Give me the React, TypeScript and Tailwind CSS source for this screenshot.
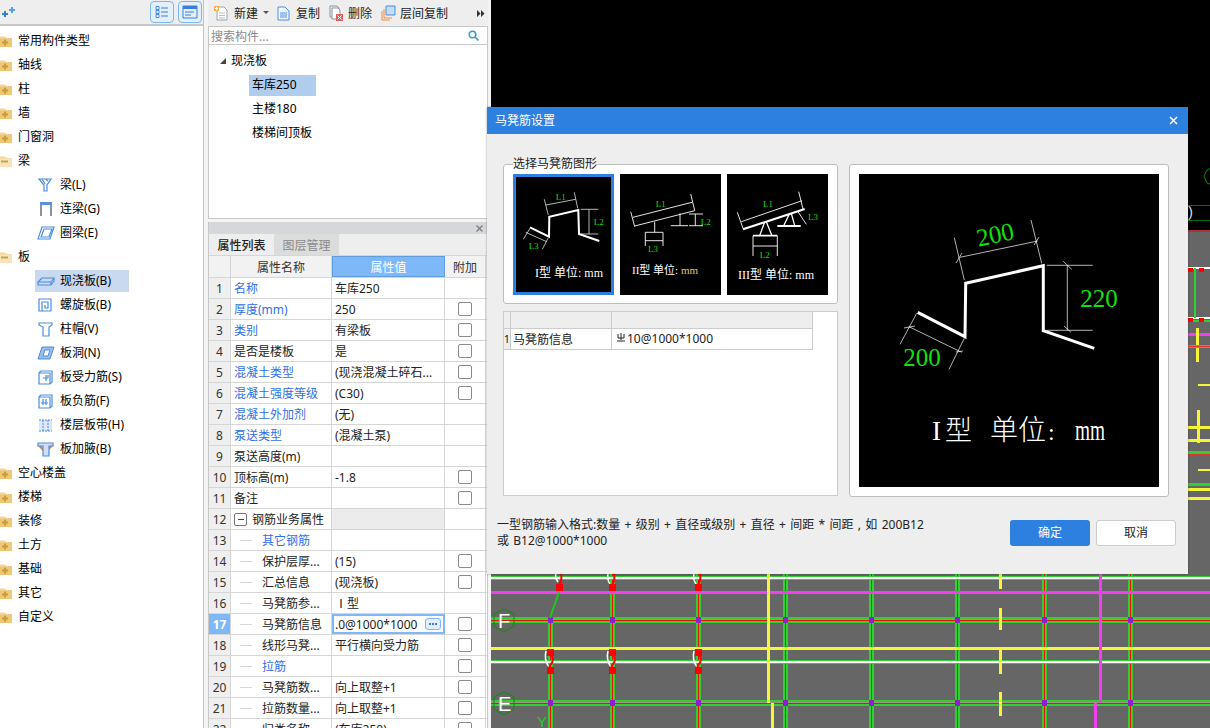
import React from 'react';

const BLUE = '#4a8ee0';

const FolderIcon = ({ open }: { open?: boolean }) => (
    <svg width="13" height="13" viewBox="0 0 13 13" className="shrink-0">
        <path d="M0 1.5h5l1.5 1.5H12v9H0z" fill="#f3d596" />
        <path d="M0 3.5h12v8.5H0z" fill={open ? '#f8e4b8' : '#eec877'} />
        {open ? (
            <path d="M1 6.5h7" stroke="#c9a050" strokeWidth="2" />
        ) : (
            <path d="M2 7.5h6M5 4.5v6" stroke="#c99a3e" strokeWidth="2" />
        )}
    </svg>
);

const LeafIcon = ({ name }: { name: string }) => {
    const s = { fill: 'none', stroke: BLUE, strokeWidth: 1.2 };
    return (
        <svg width="18" height="16" viewBox="0 0 18 16" className="shrink-0">
            {name === 'beam' && <g {...s}><path d="M2 2h12l-4 6v6H7V8z" /><path d="M5 2l3 5M9 2l2 2" /></g>}
            {name === 'link' && <g><path d="M3 1h12v3H3z" fill="#5b93d8" /><path d="M4 4v11M14 4v11" stroke="#8a949e" strokeWidth="2" fill="none" /></g>}
            {name === 'ring' && <g {...s}><path d="M5 2h12l-4 12H1z" /><path d="M7 4h8l-3 8H4z" /></g>}
            {name === 'slab' && <g {...s}><path d="M1 9l4-4h12v3l-3 4H1z" /><path d="M1 9h13l3-4M14 9v3" /></g>}
            {name === 'spiral' && <g {...s}><path d="M2 2h12v12H2z" /><path d="M5 14V5h6v6H8V8" /></g>}
            {name === 'cap' && <g {...s}><path d="M2 2h13v2l-3 2v9H6V6L2 4z" /></g>}
            {name === 'hole' && <g><path d="M5 2h12l-4 12H1z" fill="#9dbde6" stroke={BLUE} /><path d="M8 5h5l-2 6H6z" fill="#fff" stroke={BLUE} /></g>}
            {name === 'rebar' && <g {...s}><path d="M2 4l2-2h11v11l-2 2H2z" /><path d="M2 4h11v11M6 9h5M9 6v6M11 6v3" /></g>}
            {name === 'rebar2' && <g {...s}><path d="M2 4l2-2h11v11l-2 2H2z" /><path d="M2 4h11v11M4 10h7M6 6v6M9 6v6" /></g>}
            {name === 'strip' && <g><path d="M2 3h13v11H2z" fill="#dce8f6" /><path d="M2 3h13M2 14h13M6 3v11M11 3v11" stroke={BLUE} strokeDasharray="2 1" fill="none" /></g>}
            {name === 'haunch' && <g><path d="M1 5h4l2 6zM16 5h-4l-2 6z" fill="#f08020" /><path d="M1 2h15v3h-4v10H6V5H1z" fill="#cfe0f5" stroke={BLUE} strokeWidth="1.2" /></g>}
        </svg>
    );
};

const beamItems = [
    { icon: 'beam', label: '梁(L)' },
    { icon: 'link', label: '连梁(G)' },
    { icon: 'ring', label: '圈梁(E)' },
];
const slabItems = [
    { icon: 'slab', label: '现浇板(B)', selected: true },
    { icon: 'spiral', label: '螺旋板(B)' },
    { icon: 'cap', label: '柱帽(V)' },
    { icon: 'hole', label: '板洞(N)' },
    { icon: 'rebar', label: '板受力筋(S)' },
    { icon: 'rebar2', label: '板负筋(F)' },
    { icon: 'strip', label: '楼层板带(H)' },
    { icon: 'haunch', label: '板加腋(B)' },
];

const FolderRow = ({ label, open }: { label: string; open?: boolean }) => (
    <div className="h-[24px] flex items-center gap-[5px]">
        <FolderIcon open={open} />
        <span>{label}</span>
    </div>
);

const LeafRow = ({ icon, label, selected }: { icon: string; label: string; selected?: boolean }) => (
    <div className="h-[24px] flex items-center">
        <div className={`ml-[35px] w-[94px] h-[22px] flex items-center pl-[2px] gap-[5px] whitespace-nowrap ${selected ? 'bg-[#c8d9f0]' : ''}`}>
            <LeafIcon name={icon} />
            <span>{label}</span>
        </div>
    </div>
);

const LeftTree = () => (
    <aside className="w-[204px] shrink-0 h-full bg-white border-r border-[#c4c4c4] flex flex-col">
        <div className="h-[26px] bg-[#eeeeee] border-b-2 border-[#c8c8c8] flex items-center justify-between pl-[2px] pr-[1px] shrink-0">
            <svg width="14" height="12" viewBox="0 0 14 12">
                <path d="M0 8h6M3 5v6" stroke="#3a7fd5" strokeWidth="2" />
                <path d="M7 4h6M10 1v6" stroke="#5aa0e8" strokeWidth="2" />
            </svg>
            <div className="flex gap-[4px]">
                <div className="w-[24px] h-[22px] rounded-[4px] border border-[#7ab8ef] bg-[#e3f0fb] flex items-center justify-center">
                    <svg width="14" height="14" viewBox="0 0 14 14" fill="none" stroke="#3a7fd5">
                        <path d="M1 1.5h3v3H1zM1 9.5h3v3H1zM1 5.5h3v3H1z" strokeWidth="0.9" />
                        <path d="M6 3h7M6 7h7M6 11h7" />
                    </svg>
                </div>
                <div className="w-[24px] h-[22px] rounded-[4px] border border-[#7ab8ef] bg-[#e3f0fb] flex items-center justify-center">
                    <svg width="16" height="14" viewBox="0 0 16 14" fill="none" stroke="#3a7fd5">
                        <path d="M1 1h14v12H1z" />
                        <path d="M1 2.5h14" strokeWidth="3" />
                        <path d="M3 7h9M3 10h6" />
                    </svg>
                </div>
            </div>
        </div>
        <div className="pt-[3px] text-[12px] text-black">
            {['常用构件类型', '轴线', '柱', '墙', '门窗洞'].map(l => <FolderRow key={l} label={l} />)}
            <FolderRow label="梁" open />
            {beamItems.map(i => <LeafRow key={i.label} {...i} />)}
            <FolderRow label="板" open />
            {slabItems.map(i => <LeafRow key={i.label} {...i} />)}
            {['空心楼盖', '楼梯', '装修', '土方', '基础', '其它', '自定义'].map(l => <FolderRow key={l} label={l} />)}
        </div>
    </aside>
);

const Toolbar = () => (
    <div className="h-[27px] bg-[#eeeeee] border-b border-[#c8c8c8] flex items-center text-[12px] text-[#222] whitespace-nowrap relative shrink-0">
        <svg width="16" height="16" viewBox="0 0 16 16" className="ml-[5px]" fill="none">
            <path d="M4 2h7l3 3v10H4z" fill="#fff" stroke="#9aa3ad" />
            <path d="M6 8h6M6 10.500h6M6 13h6" stroke="#b8bec4" />
            <path d="M1 1h5v5H1z" fill="#f7b05a" />
            <path d="M2 3.500h3M3.500 2v3" stroke="#fff" />
        </svg>
        <span className="ml-[5px] mt-[2px]">新建</span>
        <svg width="6" height="4" viewBox="0 0 6 4" className="ml-[5px]"><path d="M0 0h6L3 3z" fill="#555" /></svg>
        <svg width="13" height="15" viewBox="0 0 13 15" className="ml-[8px]" fill="none" stroke="#4a8ee0">
            <path d="M1 1h7l4 4v9H1z" fill="#f2f7fd" />
            <path d="M3 7h7M3 9h7M3 11h7" />
        </svg>
        <span className="ml-[6px] mt-[2px]">复制</span>
        <svg width="15" height="16" viewBox="0 0 15 16" className="ml-[9px]" fill="none">
            <path d="M1 1h7l2 2v9H1z" stroke="#8e979f" />
            <path d="M3 3h6l2 2v9H3z" fill="#fff" stroke="#8e979f" />
            <path d="M7 9h7v7H7z" fill="#d9615e" />
            <path d="M8.500 10.500l4 4M12.500 10.500l-4 4" stroke="#fff" />
        </svg>
        <span className="ml-[4px] mt-[2px]">删除</span>
        <svg width="15" height="16" viewBox="0 0 15 16" className="ml-[9px]" fill="none">
            <path d="M1 6v9h8M3 4v9h8" stroke="#ee8a3c" />
            <path d="M5 1h9v9H5z" fill="#c4dcf6" stroke="#4a8ee0" />
        </svg>
        <span className="ml-[4px] mt-[2px]">层间复制</span>
        <span className="absolute right-[3px] top-[10px] flex">
            <svg width="8" height="7" viewBox="0 0 8 7" fill="#333"><path d="M0 0l3.500 3.500L0 7zM4 0l3.500 3.500L4 7z" /></svg>
        </span>
    </div>
);

const ComponentTree = () => (
    <div className="h-[192px] bg-white border-x border-b border-[#c8c8c8] shrink-0">
        <div className="h-[17px] flex items-center justify-between border-b border-[#c8c8c8] pl-[2px] pr-[8px] text-[12px] text-[#8a8a8a] box-content">
            <span className="mt-[2px]">搜索构件...</span>
            <svg width="11" height="11" viewBox="0 0 11 11" fill="none" stroke="#3d9ad0" strokeWidth="1.6">
                <circle cx="4.500" cy="4.500" r="3.300" />
                <path d="M7 7l3.500 3.500" />
            </svg>
        </div>
        <div className="pt-[4px] text-[12px] text-black">
            <div className="h-[24px] flex items-center pl-[11px] gap-[5px]">
                <svg width="6" height="6" viewBox="0 0 6 6"><path d="M6 0v6H0z" fill="#444" /></svg>
                <span>现浇板</span>
            </div>
            <div className="h-[24px] flex items-center ml-[40px]">
                <div className="w-[67px] h-[21px] bg-[#b0cdee] pl-[3px] flex items-center">车库250</div>
            </div>
            <div className="h-[24px] flex items-center ml-[43px]">主楼180</div>
            <div className="h-[24px] flex items-center ml-[43px]">楼梯间顶板</div>
        </div>
    </div>
);

type Row = {
    name: string;
    value?: string;
    link?: boolean;
    check?: boolean;
    indent?: boolean;
    group?: boolean;
    active?: boolean;
};

const rows: Row[] = [
    { name: '名称', value: '车库250', link: true },
    { name: '厚度(mm)', value: '250', link: true, check: true },
    { name: '类别', value: '有梁板', link: true, check: true },
    { name: '是否是楼板', value: '是', check: true },
    { name: '混凝土类型', value: '(现浇混凝土碎石...', link: true, check: true },
    { name: '混凝土强度等级', value: '(C30)', link: true, check: true },
    { name: '混凝土外加剂', value: '(无)', link: true },
    { name: '泵送类型', value: '(混凝土泵)', link: true },
    { name: '泵送高度(m)' },
    { name: '顶标高(m)', value: '-1.8', check: true },
    { name: '备注', check: true },
    { name: '钢筋业务属性', group: true },
    { name: '其它钢筋', link: true, indent: true },
    { name: '保护层厚...', value: '(15)', check: true, indent: true },
    { name: '汇总信息', value: '(现浇板)', check: true, indent: true },
    { name: '马凳筋参...', value: 'Ⅰ型', indent: true },
    { name: '马凳筋信息', value: '.0@1000*1000', check: true, indent: true, active: true },
    { name: '线形马凳...', value: '平行横向受力筋', check: true, indent: true },
    { name: '拉筋', link: true, check: true, indent: true },
    { name: '马凳筋数...', value: '向上取整+1', check: true, indent: true },
    { name: '拉筋数量...', value: '向上取整+1', check: true, indent: true },
    { name: '归类名称', value: '(车库250)', check: true, indent: true },
];

const PropertyRow = ({ row, index }: { row: Row; index: number }) => (
    <div className="h-[21px] flex border-b border-[#d6d6d6] text-[12px] shrink-0">
        <div className={`w-[22px] shrink-0 border-r border-[#d6d6d6] flex items-center justify-center pt-[2px] ${row.active ? 'bg-[#7eb8f8] text-white font-bold' : 'bg-[#efefef] text-[#333]'}`}>
            {index}
        </div>
        <div className="w-[101px] shrink-0 border-r border-[#d6d6d6] flex items-center whitespace-nowrap pl-[3px]">
            {row.group && (
                <span className="w-[13px] h-[13px] border border-[#777] rounded-[2px] flex items-center justify-center mr-[5px] shrink-0">
                    <span className="w-[6px] h-px bg-[#444]" />
                </span>
            )}
            {row.indent && <span className="w-[12px] h-px bg-[#d6d6d6] ml-[6px] mr-[10px] shrink-0" />}
            <span className={`mt-[2px] ${row.link ? 'text-[#2f6fe8]' : 'text-[#222]'}`}>{row.name}</span>
        </div>
        {row.active ? (
            <div className="w-[113px] shrink-0 border-2 border-[#7eb8f8] flex items-center justify-between pl-[1px] pr-[2px] whitespace-nowrap text-[#222]">
                <span className="mt-[2px]">{row.value}</span>
                <span className="w-[16px] h-[12px] rounded-[3px] border border-[#7eb8f8] bg-[#e3f0fb] flex items-center justify-center gap-[1px]">
                    <span className="w-[2px] h-[2px] bg-[#3a7fd5]" />
                    <span className="w-[2px] h-[2px] bg-[#3a7fd5]" />
                    <span className="w-[2px] h-[2px] bg-[#3a7fd5]" />
                </span>
            </div>
        ) : (
            <div className={`w-[113px] shrink-0 border-r border-[#d6d6d6] flex items-center pl-[3px] pt-[2px] whitespace-pre text-[#222] ${row.group ? 'bg-[#ececec]' : ''}`}>
                {row.value}
            </div>
        )}
        <div className="w-[41px] shrink-0 border-r border-[#d6d6d6] flex items-center justify-center">
            {row.check && <span className="w-[14px] h-[14px] rounded-[2px] border border-[#8a8a8a] bg-white" />}
        </div>
    </div>
);

const PropertyPanel = () => (
    <div className="flex-1 min-h-0 flex flex-col border-x border-[#c8c8c8] mt-[3px] overflow-hidden bg-white">
        <div className="h-[12px] bg-[#d5d7da] flex items-center justify-end pr-[4px] shrink-0">
            <svg width="7" height="7" viewBox="0 0 7 7" stroke="#808080" strokeWidth="1.400"><path d="M0.500 0.500l6 6M6.500 0.500l-6 6" /></svg>
        </div>
        <div className="h-[22px] bg-[#eeeeee] flex text-[12px] shrink-0 border-b border-[#d6d6d6]">
            <div className="w-[65px] pt-[2px] flex items-center justify-center text-[#222] font-medium">属性列表</div>
            <div className="w-[65px] pt-[2px] flex items-center justify-center bg-[#dcdcdc] text-[#8a8a8a]">图层管理</div>
        </div>
        <div className="h-[22px] flex border-b border-[#d6d6d6] text-[12px] shrink-0 bg-[#f2f2f2] text-[#333]">
            <div className="w-[22px] border-r border-[#d6d6d6]" />
            <div className="w-[101px] pt-[2px] border-r border-[#d6d6d6] flex items-center justify-center">属性名称</div>
            <div className="w-[113px] pt-[2px] border border-[#5f9ce0] bg-[#7eb8f8] text-white flex items-center justify-center">属性值</div>
            <div className="w-[41px] pt-[2px] border-r border-[#d6d6d6] flex items-center justify-center">附加</div>
        </div>
        {rows.map((row, i) => <PropertyRow key={i} row={row} index={i + 1} />)}
    </div>
);

const greenV = [550, 612, 698, 785, 871, 957, 1044, 1130];

// drawing under the dialog, in page coordinates
const CadCanvas = () => (
    <svg viewBox="491 0 719 728" className="w-[719px] h-[728px] block" fill="none" shapeRendering="crispEdges">
        <rect x="491" y="0" width="719" height="728" fill="#000" />
        <rect x="491" y="232" width="719" height="496" fill="#666" />
        <path d="M1188 205h22M1188 220h22" stroke="#0a6a0a" />
        <path d="M1188 231h22" stroke="#a33" strokeWidth="2" />
        <path d="M1188 268h22" stroke="#fff" strokeWidth="2" />
        <path d="M1188 318h22" stroke="#fff" strokeWidth="2" />
        <path d="M1188 321h22" stroke="#2fd02f" strokeWidth="2" />
        <path d="M1195 268v50" stroke="#2fd02f" strokeWidth="2" />
        <path d="M1188 334h22" stroke="#f040f0" strokeWidth="3" />
        <path d="M1197 328v34" stroke="#f5f53a" strokeWidth="3" />
        <path d="M1188 346h22" stroke="#2fd02f" strokeWidth="3" />
        <path d="M1188 346h22" stroke="#e33" />
        <path d="M1198 385h12M1198 470h12" stroke="#f5f53a" strokeWidth="2" />
        <path d="M1198 410v33M1188 427h22M1188 440h22M1188 489h22M1188 498h22" stroke="#f5f53a" strokeWidth="3" />
        <path d="M1188 452h22M1188 484h22" stroke="#2fd02f" strokeWidth="3" />
        <path d="M1188 454h22" stroke="#d33" />
        <path d="M1188 270h5M1199 270h5M1188 320h5M1199 320h5" stroke="#f00" strokeWidth="4" />

        {greenV.map(x => {
            const top = x === 550 ? 618 : 574;
            return (
                <g key={x}>
                    <path d={`M${x} ${top}V728`} stroke="#2fd02f" strokeWidth="5" />
                    <path d={`M${x} ${top}V728`} stroke="#f01010" strokeWidth="1" />
                </g>
            );
        })}
        {[620, 703].map(y => (
            <g key={y}>
                <path d={`M491 ${y}H1210`} stroke="#2fd02f" strokeWidth="6" />
                <path d={`M491 ${y}H1210`} stroke="#b08a8a" strokeWidth="2" />
                <path d={`M491 ${y}H1210`} stroke="#f01010" strokeWidth="1" />
            </g>
        ))}
        {[578, 662].map(y => (
            <g key={y}>
                <path d={`M491 ${y}H1210`} stroke="#2fd02f" strokeWidth="4" />
                <path d={`M491 ${y}H1210`} stroke="#fff" strokeWidth="2" />
            </g>
        ))}
        <path d="M491 592H1210" stroke="#f040f0" strokeWidth="3" />
        <path d="M491 648H1210" stroke="#f5f53a" strokeWidth="3" />
        <path d="M768 574V703M772 703V728" stroke="#f5f53a" strokeWidth="3" />
        <path d="M1100 574V703M1095 703V728" stroke="#f040f0" strokeWidth="3" />
        <path d="M1000 574v15M1000 608v22M1000 650v24M1000 692v24" stroke="#f5f53a" strokeWidth="3" />
        {greenV.flatMap(x => [620, 703].map(y => (
            <rect key={`${x}-${y}`} x={x - 2} y={y - 3} width="5" height="6" fill="#8a20d0" />
        )))}
        <g shapeRendering="auto">
            <path d="M559 592L550 618" stroke="#1ec81e" strokeWidth="2" />
            <path d="M561 574c1 4 0 8-2 11M614 574c1 4 0 8-2 11M700 574c1 4 0 8-2 11" stroke="#f00" strokeWidth="2" />
            <path d="M556 574c-1 2 0 5 2 8M608 574c-1 4 0 7 2 10M694 574c-1 4 0 7 2 10" stroke="#fff" strokeWidth="1.500" />
            {[550, 612, 698].map(x => (
                <g key={x}>
                    <path d={`M${x - 4} 651c-2 8 0 12 3 16`} stroke="#fff" strokeWidth="1.500" />
                    <path d={`M${x + 1} 655c3 3 2 7 0 9s-2 2 0 5`} stroke="#f00" strokeWidth="2" />
                </g>
            ))}
            <polygon points="504,609 514,614 514,626 504,632 494,626 494,614" stroke="#0f8a0f" />
            <polygon points="504,692 514,697 514,709 504,715 494,709 494,697" stroke="#0f8a0f" />
            <polygon points="1215,166 1207,170 1204,176 1207,183 1215,186" stroke="#0f8a0f" />
            <text x="498" y="628" fill="#fff" fontSize="20" fontFamily="'Liberation Sans', sans-serif">F</text>
            <text x="498" y="711" fill="#fff" fontSize="20" fontFamily="'Liberation Sans', sans-serif">E</text>
            <text x="537" y="727" fill="#22d022" fontSize="15" fontFamily="'Liberation Sans', sans-serif">Y</text>
            <text x="1188" y="217" fill="#ddd" fontSize="15" fontFamily="'Liberation Sans', sans-serif">)</text>
        </g>
        {[[559, 587], [612, 587], [698, 587], [550, 652], [612, 652], [698, 652], [550, 670], [612, 670], [698, 670]].map(([x, y]) => (
            <rect key={`${x}-${y}`} x={x - 3} y={y - 3} width="7" height="7" fill="#f00" />
        ))}
    </svg>
);

const SERIF = "'Liberation Serif', 'Noto Sans CJK SC', serif";

const ThumbOne = () => (
    <svg viewBox="0 0 101 121" className="w-[101px] h-[121px] block" fill="none" stroke="#fff">
        <path d="M17 53.300L36 62.700L36.300 42.700L65.300 36L66 60L86.300 67" strokeWidth="2" />
        <g strokeWidth="0.700">
            <path d="M31.300 25.300L35.300 41M61.300 18.300L64.700 34.300M33 31L62.700 25.300" />
            <path d="M67.700 35.300H85.300M67.700 60H85.300M76 35.300V60" />
            <path d="M17 54.300L10.300 65.300M35.300 63.700L29.300 75.300M12.700 58.300L33.700 67.700" />
        </g>
        <g fill="#11dd11" stroke="none" fontSize="9" fontFamily={SERIF} textAnchor="middle">
            <text x="47.700" y="26">L1</text>
            <text x="85.700" y="51">L2</text>
            <text x="20.700" y="75">L3</text>
        </g>
        <text x="22" y="103" fill="#fff" stroke="none" fontSize="12" fontFamily={SERIF}>I型 单位: mm</text>
    </svg>
);

const ThumbTwo = () => (
    <svg viewBox="0 0 101 121" className="w-[101px] h-[121px] block" fill="none" stroke="#fff" strokeWidth="0.900">
        <path d="M13 43.300L72 28.300M14.700 52L74.700 36.700M10.700 37.700L14.700 52.700M70.700 20L74.700 36.700" />
        <path d="M34.700 47.700V58.300M25.300 58.300H43M25.300 58.300V72M43 58.300V72M25.300 66.700H43" />
        <path d="M60 39.300V51.700M50.700 51.700H68M69 40H83M69 51.700H83M75.300 40V51.700" />
        <g fill="#11dd11" stroke="none" fontSize="9" fontFamily={SERIF} textAnchor="middle">
            <text x="40.700" y="33">L1</text>
            <text x="85.700" y="51">L2</text>
            <text x="33" y="78">L3</text>
        </g>
        <text x="12" y="100" fill="#fff" stroke="none" fontSize="11" fontFamily={SERIF}>II型 单位: <tspan fill="#f5c26b">mm</tspan></text>
    </svg>
);

const ThumbThree = () => (
    <svg viewBox="0 0 101 121" className="w-[101px] h-[121px] block" fill="none" stroke="#fff" strokeWidth="0.900">
        <path d="M16 55.300L77.700 35" strokeWidth="2.200" />
        <path d="M14.300 47.700L75 26.700M10.300 38.300L16 54.300M71.700 17.700L76 35" />
        <path d="M37.700 47.700L32.700 61.700M39.300 47.700L45 61.700M62.700 39.300L56.700 51.700M64.300 39.300L67.700 51.700" strokeWidth="1.300" />
        <path d="M26 61.700H50.300M50.300 52H73.700" strokeWidth="1.800" />
        <path d="M26 61.700V82M50.300 61.700V82M26 72H50.300M71 37.700L79.300 50.300" />
        <g fill="#11dd11" stroke="none" fontSize="9" fontFamily={SERIF} textAnchor="middle">
            <text x="41" y="33">L1</text>
            <text x="37.700" y="84">L2</text>
            <text x="86" y="45.500">L3</text>
        </g>
        <text x="11" y="104.700" fill="#fff" stroke="none" fontSize="12" fontFamily={SERIF}>III型 单位: mm</text>
    </svg>
);

const BigPreview = () => (
    <svg viewBox="0 0 300 313" className="w-[300px] h-[313px] block bg-black" fill="none" stroke="#fff">
        <path d="M58.700 138.300L106 162.700L106.700 109.300L184.300 91.700L184.300 156.700L235.300 174.300" strokeWidth="3" />
        <g strokeWidth="0.700">
            <path d="M95.300 63.700L105.300 106M172 46L182.700 89.300M101 83.300L178.700 67M97 89L103 79M175 71L180 63" />
            <path d="M187.700 91.300H233.700M187.700 156.300H233.700M208.300 91.300V156.300M204.300 87.300L212.700 95.300M205 152L212 158.300" />
            <path d="M57.700 139.300L41 170.300M105.300 164.300L90 195.300M50 152.700L102.700 178.300M45 154L56 152M97 178L104 177" />
        </g>
        <g fill="#11e011" stroke="none" fontSize="25" fontFamily={SERIF} textAnchor="middle">
            <text x="136" y="69" transform="rotate(-12 136 60)">200</text>
            <text x="240" y="133">220</text>
            <text x="63" y="192">200</text>
        </g>
        <g fill="#fff" stroke="none" fontFamily={SERIF}>
            <text x="73" y="266" fontSize="27">I</text>
            <text x="86" y="266" fontSize="27" fontWeight="300">型</text>
            <text x="131" y="266" fontSize="28" fontWeight="300">单位</text>
            <text x="189" y="266" fontSize="24">:</text>
            <text x="216" y="266" fontSize="30" textLength="30" lengthAdjust="spacingAndGlyphs">mm</text>
        </g>
    </svg>
);

const RebarGlyph = () => (
    <svg width="8" height="9" viewBox="0 0 8 9" fill="none" stroke="#222" className="mr-[2px] -mt-[3px]">
        <path d="M1 1v4h6V1M4 0v7M0 8h8" />
    </svg>
);

const SpringDialog = () => (
    <div className="absolute left-[487px] top-[107px] w-[701px] h-[467px] bg-[#eeeeee] text-[12px] text-[#222] shadow-[0_0_2px_rgba(0,0,0,0.4)]">
        <div className="h-[27px] bg-[#2d7fe0] text-white flex items-center justify-between pl-[8px] pr-[10px]">
            <span>马凳筋设置</span>
            <svg width="9" height="9" viewBox="0 0 9 9" stroke="#fff" strokeWidth="1.500"><path d="M1 1l7 7M8 1L1 8" /></svg>
        </div>
        <div className="flex gap-[11px] pl-[16px] pt-[30px]">
            <div className="w-[335px]">
                <fieldset className="-mt-[8px] h-[148px] border border-[#bdbdbd] rounded-[3px] bg-white px-[9px]">
                    <legend className="leading-[16px] text-[#222]">选择马凳筋图形</legend>
                    <div className="flex gap-[6px] pt-[2px]">
                        <div className="w-[101px] h-[121px] bg-black ring-[3px] ring-inset ring-[#2d7fe0]"><ThumbOne /></div>
                        <div className="w-[101px] h-[121px] bg-black"><ThumbTwo /></div>
                        <div className="w-[101px] h-[121px] bg-black"><ThumbThree /></div>
                    </div>
                </fieldset>
                <div className="mt-[7px] h-[185px] border border-[#cccccc] bg-white">
                    <div className="w-[309px]">
                        <div className="h-[17px] flex bg-[#eeeeee] border-b border-[#cccccc]">
                            <div className="w-[7px] border-r border-[#cccccc]" />
                            <div className="w-[101px] border-r border-[#cccccc]" />
                            <div className="flex-1 border-r border-[#cccccc]" />
                        </div>
                        <div className="h-[21px] flex border-b border-[#cccccc]">
                            <div className="w-[7px] border-r border-[#cccccc] bg-[#eeeeee] flex items-center justify-center text-[11px]">1</div>
                            <div className="w-[101px] border-r border-[#cccccc] pl-[2px] pt-[2px] flex items-center">马凳筋信息</div>
                            <div className="flex-1 border-r border-[#cccccc] pl-[5px] flex items-center"><RebarGlyph />10@1000*1000</div>
                        </div>
                    </div>
                </div>
            </div>
            <div className="w-[320px] h-[333px] border border-[#bdbdbd] rounded-[3px] bg-white p-[9px]">
                <BigPreview />
            </div>
        </div>
        <div className="flex justify-between pl-[10px] pr-[12px] mt-[23px]">
            <p className="w-[436px] leading-[16px] -mt-[3px] [word-spacing:1.2px]">一型钢筋输入格式:数量 + 级别 + 直径或级别 + 直径 + 间距 * 间距 , 如 200B12 或 B12@1000*1000</p>
            <div className="flex gap-[6px]">
                <button className="w-[80px] h-[26px] rounded-[3px] bg-[#2d7fe0] text-white">确定</button>
                <button className="w-[80px] h-[26px] rounded-[3px] bg-white border border-[#cccccc]">取消</button>
            </div>
        </div>
    </div>
);

export default function App() {
    return (
        <div className="relative w-[1210px] h-[728px] overflow-hidden flex bg-[#f4f4f4] font-['Noto_Sans','Noto_Sans_CJK_SC',sans-serif]">
            <LeftTree />
            <div className="w-[280px] ml-[4px] shrink-0 h-full flex flex-col">
                <Toolbar />
                <ComponentTree />
                <PropertyPanel />
            </div>
            <div className="ml-[3px] shrink-0">
                <CadCanvas />
            </div>
            <SpringDialog />
        </div>
    );
}
